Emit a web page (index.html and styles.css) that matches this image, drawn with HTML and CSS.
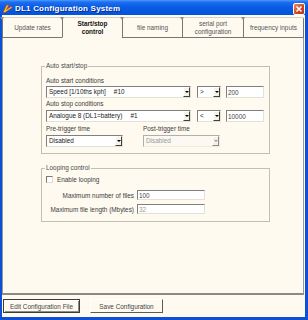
FILE: index.html
```html
<!DOCTYPE html>
<html lang="en">
<head>
    <meta charset="UTF-8">
    <title>DL1 Configuration System</title>
    <link rel="stylesheet" href="styles.css">
</head>
<body>
    <div class="window">
        <div class="titlebar">
            <svg class="app-icon" width="11" height="9" viewBox="0 0 11 9">
                <path d="M1 8.5 L4.5 1 L7 1 L4.5 5.5 L9 2.5 L10.5 3.5 L3 8.5 Z" fill="#f7c62a" stroke="#c2412a" stroke-width="0.7"/>
            </svg>
            <span class="title">DL1 Configuration System</span>
            <span class="close">
                <svg width="8" height="8" viewBox="0 0 8 8"><path d="M1.5 1.5 L6.5 6.5 M6.5 1.5 L1.5 6.5" stroke="#fff" stroke-width="1.5"/></svg>
            </span>
        </div>
        <div class="frame">
            <div class="tabs">
                <div class="tab">Update rates</div>
                <div class="tab active">Start/stop<br>control</div>
                <div class="tab">file naming</div>
                <div class="tab wide">serial port<br>configuration</div>
                <div class="tab wide last">frequency inputs</div>
            </div>
            <div class="panel">
                <fieldset class="group">
                    <legend>Auto start/stop</legend>
                    <div class="cap first">Auto start conditions</div>
                    <div class="cond-row first">
                        <div class="combo combo-wide"><span class="combo-text">Speed [1/10ths kph]<span class="tag">#10</span></span><span class="drop"></span></div>
                        <div class="combo combo-op"><span class="combo-text">&gt;</span><span class="drop"></span></div>
                        <input class="field field-value" value="200">
                    </div>
                    <div class="cap">Auto stop conditions</div>
                    <div class="cond-row">
                        <div class="combo combo-wide"><span class="combo-text">Analogue 8 (DL1=battery)<span class="tag">#1</span></span><span class="drop"></span></div>
                        <div class="combo combo-op"><span class="combo-text">&lt;</span><span class="drop"></span></div>
                        <input class="field field-value" value="10000">
                    </div>
                    <div class="trigger-row">
                        <div class="trigger-col">
                            <div class="cap">Pre-trigger time</div>
                            <div class="combo combo-trigger"><span class="combo-text">Disabled</span><span class="drop"></span></div>
                        </div>
                        <div class="trigger-col disabled">
                            <div class="cap">Post-trigger time</div>
                            <div class="combo combo-trigger"><span class="combo-text">Disabled</span><span class="drop"></span></div>
                        </div>
                    </div>
                </fieldset>

                <fieldset class="group group-loop">
                    <legend>Looping control</legend>
                    <div class="check-row">
                        <span class="check"></span>
                        <span>Enable looping</span>
                    </div>
                    <div class="num-row">
                        <span class="num-label">Maximum number of files</span>
                        <input class="field field-num" value="100">
                    </div>
                    <div class="num-row second">
                        <span class="num-label">Maximum file length (Mbytes)</span>
                        <input class="field field-num off" value="32">
                    </div>
                </fieldset>
            </div>
            <div class="buttons">
                <button class="btn btn-default">Edit Configuration File</button>
                <button class="btn btn-save">Save Configuration</button>
            </div>
        </div>
    </div>
</body>
</html>
```

FILE: styles.css
```css
body {
    margin: 0;
    font-family: "Liberation Sans", Arial, sans-serif;
    font-size: 6.4px;
    color: #3c3c3c;
}
.window {
    width: 308px;
    height: 320px;
    background: #fefaf0;
    display: flex;
    flex-direction: column;
}
.titlebar {
    height: 15px;
    flex: none;
    box-sizing: border-box;
    display: flex;
    align-items: center;
    padding: 2px 3px 0 2px;
    background: linear-gradient(#4d9bff 0, #1f6ff0 2px, #0a5ce4 45%, #0053da 100%);
}
.app-icon {
    margin-right: 2px;
    flex: none;
}
.title {
    flex: 1;
    color: #fff;
    font-weight: bold;
    font-size: 8px;
    letter-spacing: 0.2px;
    text-shadow: 1px 1px 0 #0b2a8c;
}
.close {
    width: 12px;
    height: 12px;
    box-sizing: border-box;
    border: 1px solid #fff;
    border-radius: 2px;
    background: linear-gradient(135deg, #ee8a66, #d2441f 60%, #b8321a);
    display: flex;
    align-items: center;
    justify-content: center;
}
.frame {
    flex: 1;
    display: flex;
    flex-direction: column;
    border: solid #0d4fd6;
    border-width: 0 3px 3px 2px;
}

/* tabs */
.tabs {
    display: flex;
    margin-top: 2px;
    height: 21px;
    flex: none;
}
.tab {
    width: 60px;
    box-sizing: border-box;
    border: 1px solid #77776f;
    border-top-color: #d6d3c6;
    border-right: none;
    border-radius: 2px 2px 0 0;
    display: flex;
    align-items: center;
    justify-content: center;
    text-align: center;
    line-height: 8px;
    color: #555;
    position: relative;
}
.tab::before {
    content: "";
    position: absolute;
    top: -1px;
    left: -3px;
    border-left: 2px solid transparent;
    border-right: 2px solid transparent;
    border-top: 3px solid #8d8d86;
}
.tab.wide { width: 61px; }
.tab.last { border-right: 1px solid #77776f; }
.tab.active {
    border-bottom-color: #fefaf0;
    font-weight: bold;
    color: #111;
}

/* panel */
.panel {
    height: 257px;
    flex: none;
    box-sizing: border-box;
    margin-right: 1px;
    border: 1px solid #919b9c;
    border-top: none;
    border-bottom: 2px solid #8a8a84;
    padding-top: 24px;
}
.group {
    margin: 0 0 0 38px;
    width: 229px;
    min-width: 0;
    box-sizing: border-box;
    border: 1px solid #c2bfb3;
    padding: 6px 4px 6px 4px;
}
.group legend {
    padding: 0 1px;
    margin-left: -1px;
    line-height: 8px;
    color: #4a4a4a;
}
.group-loop {
    margin-top: 10px;
    padding: 3px 4px 7px;
}
.cap {
    line-height: 9px;
    margin-top: 1px;
}
.cap.first { margin-top: 0; }
.cond-row {
    display: flex;
    margin-top: 2px;
}
.cond-row.first { margin-top: 1px; }

.combo {
    display: flex;
    height: 12px;
    box-sizing: border-box;
    border: 1px solid;
    border-color: #7f7f7f #e4e1d6 #e4e1d6 #7f7f7f;
    background: #fff;
    color: #222;
}
.combo-text {
    flex: 1;
    line-height: 10px;
    padding-left: 2px;
    white-space: nowrap;
    overflow: hidden;
}
.tag { margin-left: 8px; }
.drop {
    width: 7px;
    flex: none;
    box-sizing: border-box;
    border: 1px solid;
    border-color: #fff #404040 #404040 #fff;
    background: #f4f1e6;
    display: flex;
    align-items: center;
    justify-content: center;
}
.drop::after {
    content: "";
    border-left: 2px solid transparent;
    border-right: 2px solid transparent;
    border-top: 2px solid #000;
}
.combo-wide { width: 145px; }
.combo-op { width: 24px; margin-left: 6px; }
.combo-trigger { width: 77px; margin-top: 2px; }

.field {
    height: 12px;
    box-sizing: border-box;
    border: 1px solid;
    border-color: #7f7f7f #e4e1d6 #e4e1d6 #7f7f7f;
    background: #fff;
    padding: 0 1px;
    font: inherit;
    color: #444;
    outline: none;
}
.field-value {
    width: 38px;
    margin-left: 5px;
}
.trigger-row {
    display: flex;
    margin-top: 1px;
}
.trigger-col { width: 97px; }
.trigger-col.disabled .combo {
    background: #fbf9f2;
    border-color: #b0b0a8 #eeebe0 #eeebe0 #b0b0a8;
    color: #9a9a9a;
}
.trigger-col.disabled .drop { border-color: #fff #8a8a8a #8a8a8a #fff; }
.trigger-col.disabled .drop::after { border-top-color: #9a9a9a; }

.check-row {
    display: flex;
    align-items: center;
    height: 9px;
}
.check {
    width: 7px;
    height: 7px;
    box-sizing: border-box;
    border: 1px solid;
    border-color: #7a7a7a #e0ddd0 #e0ddd0 #7a7a7a;
    background: #fff;
    margin-right: 4px;
}
.num-row {
    display: flex;
    align-items: center;
    margin-top: 6px;
}
.num-row.second { margin-top: 4px; }
.num-label {
    width: 88px;
    text-align: right;
    margin-right: 3px;
}
.field-num {
    width: 68px;
    height: 10px;
}
.field-num.off { color: #9a9a9a; }

/* bottom buttons */
.buttons {
    display: flex;
    gap: 10px;
    padding: 4px 0 0 1px;
}
.btn {
    height: 14px;
    box-sizing: border-box;
    padding: 0;
    font: inherit;
    color: #444;
    background: #fefaf0;
}
.btn-default {
    width: 77px;
    border: 1px solid #3c3c3c;
    box-shadow: inset 1px 1px 0 #fff, inset -1px -1px 0 #8c8c8c;
}
.btn-save {
    width: 73px;
    border: 1px solid;
    border-color: #fff #5a5a5a #5a5a5a #fff;
}
```
